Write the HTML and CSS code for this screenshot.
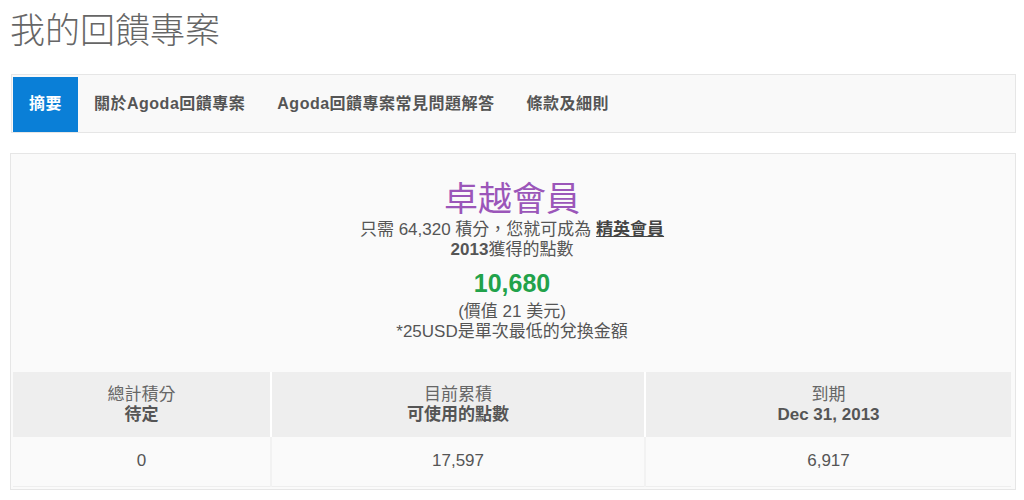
FILE: index.html
```html
<!DOCTYPE html>
<html lang="zh-Hant">
  <head>
    <meta charset="UTF-8" />
    <title>我的回饋專案</title>
    <link rel="stylesheet" href="styles.css">
  </head>
  <body>
    <div class="page">
      <!-- 標題 -->
      <h1 class="title">我的回饋專案</h1>
      <!-- 分頁選單 -->
      <ul class="tabs">
        <li class="tab active">摘要</li>
        <li class="tab">關於Agoda回饋專案</li>
        <li class="tab">Agoda回饋專案常見問題解答</li>
        <li class="tab">條款及細則</li>
      </ul>
      <!-- 會員摘要 -->
      <div class="panel">
        <div class="summary">
          <div class="level">卓越會員</div>
          <div class="line">只需 64,320 積分，您就可成為 <a class="next">精英會員</a></div>
          <div class="line"><b>2013</b>獲得的點數</div>
          <div class="points">10,680</div>
          <div class="line">(價值 21 美元)</div>
          <div class="line">*25USD是單次最低的兌換金額</div>
        </div>
        <table class="stats">
          <tr class="head">
            <td class="c1">總計積分<br><b>待定</b></td>
            <td class="c2">目前累積<br><b>可使用的點數</b></td>
            <td class="c3">到期<br><b>Dec 31, 2013</b></td>
          </tr>
          <tr class="body">
            <td>0</td>
            <td>17,597</td>
            <td>6,917</td>
          </tr>
        </table>
      </div>
    </div>
  </body>
</html>
```

FILE: styles.css
```css
/* 初始化 */
* {
  margin: 0;
  padding: 0;
  box-sizing: border-box;
}
li {
  list-style: none;
}
body {
  background: #fff;
  font-family: "Liberation Sans", "Noto Sans CJK TC", sans-serif;
  color: #555;
}
.page {
  padding: 6px 8px 0 10px;
}
/* 標題 */
.title {
  font-family: "Noto Sans CJK TC", sans-serif;
  font-weight: 300;
  font-size: 35px;
  line-height: 44px;
  color: #666;
}
/* 分頁 */
.tabs {
  display: flex;
  margin-top: 24px;
  margin-left: 1px;
  height: 59px;
  padding: 2px 1px 0 1px;
  background: #f9f9f9;
  border: 1px solid #e6e6e6;
}
.tab {
  padding: 0 16px;
  height: 55px;
  line-height: 54px;
  font-size: 16px;
  font-weight: bold;
  letter-spacing: 0.5px;
  color: #555;
}
.tab.active {
  background: #0a7fd7;
  color: #fff;
}
/* 面板 */
.panel {
  margin-top: 20px;
  background: #fafafa;
  border: 1px solid #e6e6e6;
  padding: 0 4px 2px 2px;
}
.summary {
  text-align: center;
  padding: 24px 0 30px;
}
.level {
  font-family: "Noto Sans CJK TC", sans-serif;
  font-size: 34px;
  line-height: 38px;
  margin-bottom: 4px;
  color: #9b56b9;
}
.line {
  font-size: 17px;
  line-height: 20px;
  color: #555;
}
.next {
  font-weight: bold;
  text-decoration: underline;
  color: #444;
}
.points {
  font-size: 25px;
  font-weight: bold;
  color: #22a24a;
  line-height: 28px;
  margin: 9px 0 5px;
}
/* 積分表格 */
.stats {
  width: 100%;
  border-collapse: collapse;
  text-align: center;
  font-size: 17px;
  color: #555;
}
.stats td {
  border-left: 2px solid #fff;
}
.stats td:first-child {
  border-left: 0;
}
.head td {
  background: #eee;
  height: 65px;
  line-height: 20px;
  color: #666;
}
.head b {
  color: #555;
}
.c1 {
  width: 258px;
}
.c2 {
  width: 374px;
}
.body td {
  height: 49px;
  background: #fafafa;
  border-bottom: 1px solid #eee;
  border-left-color: #f2f2f2;
}
```
